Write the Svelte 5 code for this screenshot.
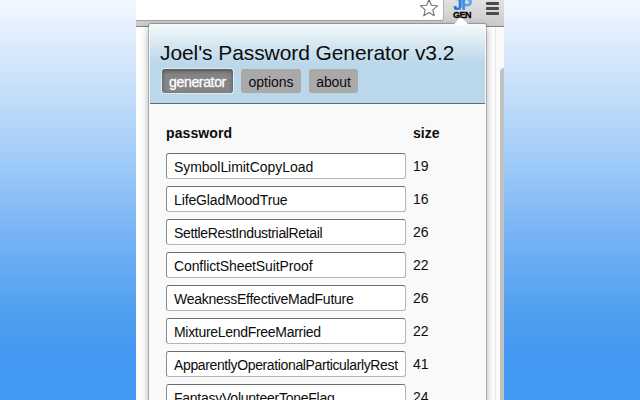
<script>
  const tabs = [
    { name: 'generator', active: true },
    { name: 'options', active: false },
    { name: 'about', active: false }
  ];
  const passwords = [
    { text: 'SymbolLimitCopyLoad', size: 19, spacing: -0.05 },
    { text: 'LifeGladMoodTrue', size: 16, spacing: -0.12 },
    { text: 'SettleRestIndustrialRetail', size: 26, spacing: -0.34 },
    { text: 'ConflictSheetSuitProof', size: 22, spacing: -0.11 },
    { text: 'WeaknessEffectiveMadFuture', size: 26, spacing: -0.26 },
    { text: 'MixtureLendFreeMarried', size: 22, spacing: -0.3 },
    { text: 'ApparentlyOperationalParticularlyRest', size: 41, spacing: -0.37 },
    { text: 'FantasyVolunteerToneFlag', size: 24, spacing: -0.25 }
  ];
</script>

<div class="stage">
  <div class="browser">
    <div class="toolbar">
      <div class="omnibox">
        <svg width="20" height="20" viewBox="0 0 20 20">
          <path d="M10 .6l2.4 5.7 6.1.5-4.7 4 1.5 6-5.3-3.3-5.3 3.3 1.5-6-4.7-4 6.1-.5z" fill="#fff" stroke="#737373" stroke-width="1.1" stroke-linejoin="round" />
        </svg>
      </div>
      <div class="extension">
        <span class="jp">JP</span>
        <span class="gen">GEN</span>
      </div>
      <div class="menu"><i></i><i></i><i></i></div>
    </div>
    <div class="page"><div class="scrollbar"><div class="thumb"></div></div></div>

    <div class="popup">
      <svg class="arrow" width="18" height="9" viewBox="0 0 18 9"><path d="M1 9L8 2Q9 1.2 10 2L17 9z" fill="#fff" /></svg>
      <header>
        <h1>Joel's Password Generator v3.2</h1>
        <nav>
          {#each tabs as tab}
            <button class={tab.name} class:active={tab.active}>{tab.name}</button>
          {/each}
        </nav>
      </header>
      <main>
        <div class="row head"><span class="first">password</span><span>size</span></div>
        {#each passwords as p}
          <div class="row">
            <div class="field"><span style="letter-spacing: {p.spacing}px">{p.text}</span></div>
            <span class="size">{p.size}</span>
          </div>
        {/each}
      </main>
    </div>
  </div>
</div>

<style>
  .stage {
    width: 640px;
    height: 400px;
    overflow: hidden;
    display: flex;
    justify-content: center;
    background: linear-gradient(#f2f7fe 0, #e9f2fd 20px, #d5e7fb 60px, #bddbf9 105px, #9fcbf8 160px, #84baf6 212px, #67abf3 265px, #4e9ef1 320px, #4398f2 360px, #4398f2 400px);
    font-family: "Liberation Sans", Arial, sans-serif;
    color: #0c0c0c;
  }
  .browser {
    position: relative;
    width: 368px;
    height: 400px;
    overflow: hidden;
    display: flex;
    flex-direction: column;
    background: #fff;
  }
  .toolbar {
    box-sizing: border-box;
    flex: none;
    height: 27px;
    display: flex;
    align-items: flex-start;
    background: linear-gradient(#e2e2e2, #cacaca);
    border-bottom: 1px solid #858585;
  }
  .omnibox {
    box-sizing: border-box;
    width: 308px;
    height: 21px;
    display: flex;
    justify-content: flex-end;
    padding-right: 4px;
    background: #fff;
    border-right: 1px solid #b0b0b0;
    border-bottom: 1px solid #a2a2a2;
    border-bottom-right-radius: 3px;
  }
  .omnibox svg { margin-top: -1px; }
  .extension {
    width: 22px;
    height: 20px;
    margin-left: 7px;
    display: flex;
    flex-direction: column;
    align-items: center;
    font-weight: bold;
  }
  .jp {
    height: 10px;
    line-height: 9px;
    font-size: 16px;
    letter-spacing: -0.8px;
    padding: 0 1px 0 2px;
    background: linear-gradient(100deg, #1d6fd8 25%, #55a8f2 80%);
    background-clip: text;
    -webkit-background-clip: text;
    color: transparent;
    -webkit-text-stroke: 0.6px transparent;
  }
  .gen {
    line-height: 10px;
    font-size: 9px;
    letter-spacing: -0.5px;
    color: #000;
    -webkit-text-stroke: 0.3px #000;
  }
  .menu {
    width: 13px;
    margin: 2px 0 0 13px;
    display: flex;
    flex-direction: column;
    gap: 2px;
  }
  .menu i {
    height: 3px;
    border-radius: 1px;
    background: #4b4b4b;
  }
  .page {
    flex: 1;
    display: flex;
    justify-content: flex-end;
  }
  .scrollbar {
    box-sizing: border-box;
    width: 9px;
    padding: 41px 0 0 4px;
    background: #fafafa;
    border-left: 1px solid #e6e6e6;
  }
  .thumb {
    height: 340px;
    background: #c1c1c1;
    border-top-left-radius: 4px;
  }
  .popup {
    position: absolute;
    left: 13px;
    top: 24px;
    width: 337px;
    height: 390px;
    box-sizing: border-box;
    padding: 0 1px;
    background: #f9f9f9;
    border-radius: 2px;
    box-shadow: 0 0 0 1px rgba(0, 0, 0, 0.2), 0 3px 9px rgba(0, 0, 0, 0.38);
  }
  .arrow {
    position: absolute;
    left: 303px;
    top: -8px;
  }
  header {
    box-sizing: border-box;
    height: 80px;
    padding: 16px 0 0 10px;
    background: linear-gradient(#f5fafc 0, #d6e7f2 20px, #bbd7ea 40px, #bbd7ea 100%);
    border-bottom: 1px solid #5f6d77;
  }
  h1 {
    margin: 0;
    height: 29px;
    line-height: 25px;
    font-size: 21px;
    font-weight: normal;
    letter-spacing: -0.09px;
    white-space: nowrap;
  }
  nav {
    display: flex;
    gap: 8px;
    padding-left: 2px;
  }
  button {
    box-sizing: border-box;
    height: 24px;
    padding: 0;
    border: 0;
    border-radius: 3px;
    background: #a9a9a9;
    font: 14px/26px "Liberation Sans", Arial, sans-serif;
    color: #0c0c0c;
    text-align: center;
  }
  .generator { width: 71px; letter-spacing: -0.35px; }
  .options { width: 60px; }
  .about { width: 49px; letter-spacing: -0.15px; }
  .active {
    color: #fff;
    background: #858585;
    box-shadow: inset 0 2px 4px rgba(0, 0, 0, 0.4);
    outline: 1px dotted #fff;
    outline-offset: 0;
    -webkit-text-stroke: 0.3px #fff;
  }
  main {
    padding: 19px 0 0 16px;
    font-size: 14px;
  }
  .row {
    height: 33px;
    display: flex;
    gap: 7px;
  }
  .head {
    height: 30px;
    line-height: 21px;
    font-weight: bold;
  }
  .first { width: 240px; letter-spacing: 0.1px; }
  .field {
    box-sizing: border-box;
    width: 240px;
    height: 26px;
    padding: 0 7px;
    line-height: 26px;
    background: #fff;
    border: 1px solid #b4b4b4;
    border-top-color: #6e6e6e;
    border-left-color: #8a8a8a;
    border-radius: 3px;
  }
  .field span {
    display: block;
    overflow: hidden;
    white-space: nowrap;
  }
  .size { line-height: 27px; }
</style>
